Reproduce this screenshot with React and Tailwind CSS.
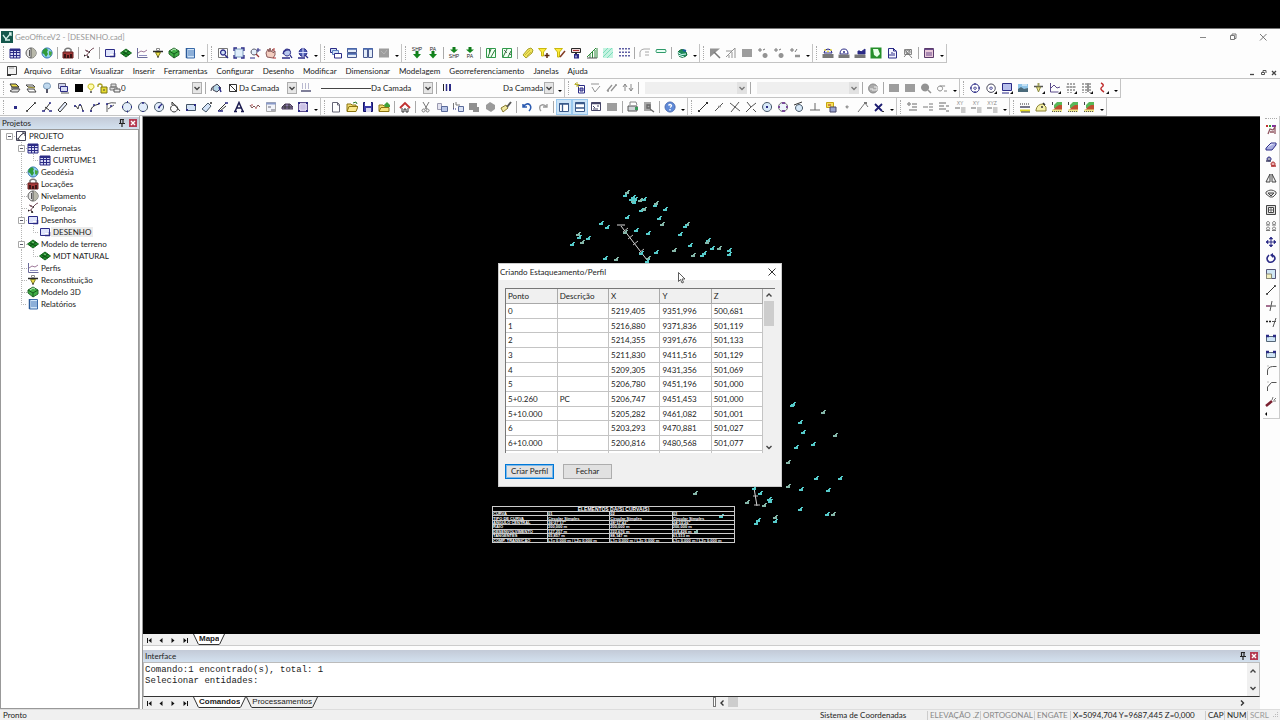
import React, { useState } from 'react'

const N = '#2b2b86'
const G = '#939393'
const K = '#2a2a2a'
const B = '#5a7fc0'
const L = '#cfe0f5'
const Y = '#f0e04a'
const E = '#1f8a2a'
const R = '#b03030'

// every shape is [path, stroke, fill, stroke width], drawn on a 12x12 grid
const icons = {
    table: [['M1 2h10v9H1z', N, '#d6d8f4'], ['M1 3h10', N, '', 2], ['M1 5.500h10M1 8.500h10M4.500 3v8M7.500 3v8', N]],
    level: [['M6 1a5 5 0 1 0 .1 0z', '#555', '#e4e4e4'], ['M6 1a5 5 0 0 1 0 10z', '', '#b8b8aa'], ['M6 1v10M4.500 3v6', '#555']],
    globe: [['M6 1a5 5 0 1 0 .1 0z', '#2a6ab0', '#8fd0ee'], ['M2 3l3-2 2 2-1 2 1 2-2 3-2-3-2-1z', '', '#2f9a3a'], ['M8 4l3 1-1 4-2-1z', '', '#49a83c']],
    lock: [['M3 5V2.500Q6 0 9 2.500V5', '#777', '', 1.5], ['M1 5h10v6H1z', '#6a2020', '#a33838'], ['M2 7h2v4H2zM8 7h2v4H8zM5 8h2v3H5z', '', '#3a1414']],
    poly: [['M1 9l3-1 2-3-3-1M6 5l3-3 2-1M4 8l2 3M2 3l3 1', '#7a5560'], ['M1 8.500h1M6 5h1M4 10h2', '#222', '', 1.5]],
    doc: [['M1.500 2.500h9v7h-9z', N, '#dfe4fb'], ['M6 7h4v3H6z', '', '#fff'], ['M6 9.500h5M10.500 6v4', N, '', 1.5]],
    diamond: [['M6 2l5.500 4L6 10 .5 6z', '#14641c', E], ['M3 5l6 3M9 4L3 8', '#0d4a14'], ['M5 4l2 1', '#8ad08a']],
    profile: [['M1.500 1v9.500h10', '#6a6a9a'], ['M2 6l3-2 3 1 3-2', '#a07a9a'], ['M3 8.500h8', '#8f8fc0']],
    recon: [['M1 4.500h10', K, '', 1.5], ['M3.500 5.500h5L6 10z', '#7a7a20', Y], ['M4.500 1.500h3v2h-3z', '#888', '#fff'], ['M6 9v2', K]],
    model3d: [['M6 1l5 3v4l-5 3-5-4V4z', '#2a6a30', '#3fae45'], ['M1 4l5 3 5-3M6 7v4', '#155a1c'], ['M3 4l3-2 2 1', '#bfeabf']],
    report: [['M2.500 1.500h8v9.500h-8z', '#3a6aa8', '#cfe4f8'], ['M4 4h6M4 6h6M4 8h6', '#4a7ab8'], ['M2.500 1v10', '#2a5a98', '', 1.5]],
    project: [['M1.500 1.500h9v9h-9z', '#44445a', '#fff'], ['M3 9l3-4 3-2M1 9h3v2', '#334'], ['M7 3h3v3', '#334']],
    zoomWin: [['M1.500 1.500h9v9h-9z', '#777'], ['M6 3a2.500 2.500 0 1 0 .1 0z', N, L, 1.3], ['M8 8l3 3', N, '', 1.500]],
    zoomExt: [['M2 2h8v8H2z', '#7a9ac0', '#dfeefa'], ['M1 4V1h3M8 1h3v3M11 8v3H8M4 11H1V8', N, '', 1.3]],
    zoomScale: [['M5 2a3 3 0 1 0 .1 0z', '#556', '#e4f0fa'], ['M7 7l3 3', '#933', '', 1.3], ['M9 1v4M7.500 3h4M1 11h5', N]],
    pan: [['M2 10L1 6l2-4 1 3 1-4 1 4 2-3 0 4 2-2v4l-2 3z', '#8a5a5a', '#f3cdbf'], ['M9 1v3M8 11h3', R]],
    zoomPrev: [['M6 2a3.500 3.500 0 1 0 .1 0z', N, '#b8c8ee'], ['M9 8l2 3M2 7Q3 2 9 3M1 11h8', N, '', 1.300]],
    zoomAll: [['M6 1.500a4 4 0 1 0 .1 0z', N, '#4c5cb0'], ['M6 0v11M1 5.500h10', '#dfe4ff'], ['M8 8l3 3M1 11h7', N, '', 1.3]],
    cascade: [['M.5 1.500h6v4h-6z', N, L], ['M2.500 3.500h6v4h-6z', B, L], ['M4.500 6.500h7v4.500h-7z', N, '#fff']],
    tileH: [['M1.500 1.500h9v4h-9zM1.500 6.500h9v4h-9z', '#4a5a90', '#e4edf8'], ['M1 2h10M1 7h10', '#4a6ab0', '', 1.5]],
    tileV: [['M1.500 1.500h4v9h-4zM6.500 1.500h4v9h-4z', '#4a5a90', '#e4edf8'], ['M1 2h10', '#4a6ab0', '', 1.5]],
    greyBox: [['M1 1.500h10v9H1z', '', '#9d9d9d'], ['M3 4l3 3 3-4', '#b5b5b5']],
    down: [['M6 4v4', '#0f7a1a', '', 3], ['M2 7h8l-4 4.500z', '', '#12851c']],
    top: [['M6 0v3', '#0f7a1a', '', 3], ['M2 2.500h8L6 6z', '', '#12851c']],
    hatch: [['M1.500 1.500h9v9h-9z', '#2f9a4a', '#f2fff4'], ['M3 10l3-8M6 10l4-7M4.500 2v4', '#2f7a3c']],
    hatch2: [['M1.500 1.500h9v9h-9z', '#2f9a4a', '#f2fff4'], ['M2 10l4-8M7 10l3-6', '#2f7a3c'], ['M3 3l3 3M8 6l2 2', K, '', .7]],
    tag: [['M1 8l5-6 3-1 2 2-1 3-6 5z', '#a8a02a', '#efe35a'], ['M3 8l5-5M5 9l4-4', '#c8b83a']],
    filterAdd: [['M.5 1.500h8L5.500 5v4h-2V5z', '#c8b80f', '#ffec3a'], ['M9 6v5M6.500 8.500h5', '#5a2a10', '', 1.5]],
    filterEdit: [['M.5 1.500h8L5.500 5v5h-2V5z', '#c8b80f', '#ffec3a'], ['M6 10l5-6', '#803a20', '', 1.5]],
    save2: [['M1.500 1.500h9v4h-9z', K, '#f0dada'], ['M3 3.500h6', R], ['M6 6v2', K, '', 2], ['M4 7h5v4.500H4z', '', N], ['M6 8.500v2', '#fff']],
    rain: [['M1 10l9-9M4 11V7M6.500 11V5M9 11V3M11 11V1', '#2f8a3c'], ['M1 11h10', '#555']],
    wash: [['M1 1h10v10H1z', '', '#c4f3e0'], ['M1 6l5-5M1 10l9-9M5 11l6-6', '#7bdcbc']],
    dots: [['M2 1v10M5 1v10M8 1v10M11 1v10', N, '', 1.5, '1.500 2']],
    arcText: [['M1 10V5Q2 2 5 2h6M6 5h4M6 8h4', '#a8a8a8']],
    pill: [['M1.500 2.500h9q1 2 0 3h-9q-1-1 0-3z', '#2f9a6a', '#e9fff5']],
    planet: [['M2 5q4-5 8 0l1 3q-4 4-8 1z', '#176a3a', '#1d8a5a'], ['M1 5q4 4 9 2M2 8l6 2', '#dff'], ['M7 3l3 1', '#1a5aa0', '', 2]],
    gTri: [['M1 1.500h10L1 10z', '', G], ['M5 5l6 6', '#777', '', 1.5]],
    gLines: [['M1 10L10 1M10 1v10M7 5v6M4 8v3M1 4h6', G]],
    gRect: [['M1 2h10v8H1z', '', '#9d9d9d']],
    gDots: [['M1 3h4M3 1v4M6 3l2-1', '#777'], ['M8 6a2.500 2.500 0 1 0 .1 0z', '', G]],
    gMinus: [['M1 3h4M3 1v4M6 5l2-3', '#777'], ['M6 9h5', G, '', 2.500]],
    dome: [['M2 6q0-4 4-4t4 4z', N, '#e9e9ff'], ['M.5 7h11v4H.5z', '', '#777'], ['M2 3h2M8 3h2M5 4.500h2', Y, '', 1.5]],
    dome2: [['M2 7q0-5 4-5t4 5z', N, '#fff'], ['M5 5h2', N, '', 1.5], ['M.5 7.500h11V11H.5z', '', '#777']],
    dome3: [['M4 7V4h2l1 1 4-3v5z', N, N], ['M.5 7.500h11V11H.5z', '', '#777']],
    greenTile: [['M.5 .5h11v11H.5z', '', '#258f2a'], ['M3 2h5l2 5-3 3-3-2z', '', '#e8ffe8']],
    page: [['M2.500 1.500h5l3 3v6.500h-8z', N, '#f4f4ff'], ['M4 9V7M6 9V5M8 9V6M7.500 1v3h3', N]],
    pageX: [['M2.500 2.500h7v5h-7z', '#888', '#eee'], ['M2 10l7-8M3 3l7 8', '#666', '', .8], ['M6 3a2 2 0 1 0 .1 0z', '#777']],
    frame: [['M1.500 1.500h9v9h-9z', '#5a3a6a', '#e8c8d8'], ['M1 2.500h10M3 6h6M3 8h6', '#6a4a8a', '', 1.200]],
    layers: [['M1 9l3-2h7l-2 3H3z', '#555', '#ddd'], ['M1 2h6l3 3H3z', '#333', Y], ['M2 6h8', K]],
    layers2: [['M1 3h7l2 2H3zM2 7h7l2 3H4z', '#444', '#fff'], ['M3 5l7 1', '#9a9030']],
    bulbBlue: [['M6 1a3 3 0 0 1 1 6H5a3 3 0 0 1 1-6z', '#7a9ab8', '#bfd8ee'], ['M6 7v4', '#556', '', 2]],
    layers3: [['M1.500 1.500h7l0 5h-7z', '#667', '#d0d4ee'], ['M3.500 4.500h7v5h-7z', N, '#d8dcf4'], ['M4 11h8', '#555']],
    black: [['M2 2h8v8H2z', '', '#000']],
    bulb: [['M6 2a2.500 2.500 0 0 1 1 5v1H5V7a2.500 2.500 0 0 1 1-5z', '#c8bd20', '#fffcb0'], ['M6 9v2', '#777', '', 2]],
    padlock: [['M1 5V3q2-2 4 0v2', '#a8a020', '', 1.3], ['M4 5h6v6H4z', '#7a7410', '#e8dc30'], ['M7 7v2', '#444']],
    printer: [['M2 2h5v3H2zM1 5h7v3H1z', '#777', '#ddd'], ['M5 7h6v3H5z', '#555', '#eee']],
    bucket: [['M3 5l4-3 4 4-4 4-4-2z', '#445', '#b8d8e8'], ['M1 9q0-4 3-5', '#445'], ['M9 5l2 5', N, '', 1.5]],
    noColor: [['M2.500 2.500h7v7h-7z', '#333', '#fff'], ['M2 2l8 8', '#333']],
    lineType: [['M2.500 1v6M5.500 1v6M8.500 1v6', '#b9b9d0'], ['M1 9h10', '#557', '', 1.500]],
    weight: [['M2.500 2v7', '#222', '', 1], ['M5.500 2v7', N, '', 1.5], ['M9 2v7', N, '', 2]],
    newBlock: [['M4.500 3.500h6v7.500h-6z', N, '#fff'], ['M6 6h3v3H6z', N, '#99c'], ['M3 0v5M.5 2.500h5M1 1l4 4', '#b8b030']],
    gCheck: [['M1 2h8M2 5l3 5 5-6', G]],
    gSlash: [['M1 9l5-6M5 9l5-6M1 9h2M9 3h2', G, '', 1.3]],
    gArrows: [['M3 9V2M1 5l2-3 2 3M9 2v7M7 6l2 3 2-3', '#888']],
    gCircle: [['M6 2a4.500 4.500 0 1 0 .1 0z', '#888', '#aaa'], ['M3 7h3v2M7 5h3v3H7', '#eee']],
    gBlob: [['M5 1.500a4 4 0 1 0 .1 0z', '', G], ['M8 8l3 3', G, '', 1.5]],
    gSigma: [['M4 4a2.500 2.500 0 1 0 .1 0h5M8 9h3', '#888']],
    ring: [['M6 2a4.200 4.200 0 1 0 .1 0z', N, '#fff'], ['M6 5a1.200 1.200 0 1 0 .1 0zM6 1v2M6 9v2M1 6h2M9 6h2', N]],
    ring2: [['M6 2a4.200 4.200 0 1 0 .1 0z', '#445', '#fff'], ['M6 5a1.200 1.200 0 1 0 .1 0z', N], ['M12 9v3H9z', '', '#111']],
    screen2: [['M1.500 1.500h9v7h-9z', N, '#b8c0ec'], ['M12 9v3H9z', '', '#111'], ['M1 11h7', N]],
    photo: [['M1 2h10v8H1z', '', '#8fc4e8'], ['M1 10V7l3-2 3 2 4-1v4z', '', '#4a6a7a'], ['M5 3h5', '#fff']],
    recon2: [['M1 4.500h9', '#555', '', 1.5], ['M3.500 5h4l-2 5z', '#8a8a40', '#f0e890'], ['M5.500 1v3', '#a0a060', '', 2], ['M12 9v3H9z', '', '#111']],
    prof2: [['M1.500 1v9h8M2 6l3-3 3 3 3-1', '#5a4a8a'], ['M12 9v3H9z', '', '#111']],
    sect: [['M3 1v10M6 1v10M9 1v8', '#555', '', 1, '2 1'], ['M1 5h10', '#999'], ['M12 9v3H9z', '', '#111']],
    sect2: [['M2 1v10M5 1v10M9 1v10', '#555', '', 1, '2 1'], ['M7 1v9', K], ['M12 9v3H9z', '', '#111']],
    river: [['M4 1q4 2 1 4t2 5', '#c03030', '', 1.500], ['M12 9v3H9z', '', '#111']],
    point: [['M5 5h3v3H5z', '', N]],
    line: [['M2 10l8-8', '#333'], ['M1 10h2M9 2h2', '#333', '', 1.5]],
    angle: [['M3 10l6-8M4 6l4 3', '#333'], ['M1 10h3M8 10h3', N, '', 1.5], ['M8 2h2', N, '', 1.5]],
    ruler: [['M1 9l7-8 2 2-7 8z', '#333', '#e8f0ff']],
    curve: [['M1 5h2l2 3q1-6 3-4l2 6', '#444'], ['M1 5h2M6 4h2M9 10h2', N, '', 1.5]],
    arc: [['M2 11Q1 5 10 3', '#333'], ['M1 10h2M4 4h2M9 2.500h2', N, '', 1.5]],
    arc2: [['M2 11V3q4-2 9-1M3 8l6-4', '#333', '', .8], ['M1 3h2M5 5h2', N, '', 1.5]],
    circle: [['M6 1.500a4.500 4.500 0 1 0 .1 0z', '#456', '#e2edfb'], ['M6 1h1M1 6h1M10 6h1M6 10.500h1', N, '', 2]],
    circle2: [['M6 1.500a4.500 4.500 0 1 0 .1 0z', '#456', '#e2edfb'], ['M6 1v2M6 10v1', N, '', 1.5]],
    circle3: [['M6 1.500a4.500 4.500 0 1 0 .1 0z', '#456', '#e2edfb'], ['M6 6l3-3M5 6.500h2', N, '', 1.300]],
    tan: [['M5 4a3.500 3.500 0 1 0 .1 0z', '#333'], ['M3 1l8 9M3 1v3', '#333']],
    rect: [['M1.500 3.500h9v6h-9z', '#456', '#d3e2f7'], ['M1 9h2M9 4h2', N, '', 2]],
    rect2: [['M1 8l6-6 3 3-5 6z', '#456', '#d3e2f7'], ['M9 2h2', K, '', 1.5]],
    rect3: [['M1 10l8-8M3 10l6-5', '#333'], ['M1 10h5M8 2h3', N, '', 1.3]],
    text: [['M2 10.500l4-9 4 9M4 7h5M1 10.500h3M8 10.500h3', '#1c1c50', '', 1.5]],
    zig: [['M1 4l2 3 2-2 2 2 2-3 2 2', '#7a5050'], ['M2 4h2M6 7h2', '#c88', '', 1.5]],
    table2: [['M1.500 1.500h9v9h-9z', '#aaa', '#f2f4fa'], ['M1 2.500h10', '#8a9ac8', '', 2], ['M3 6h3M6 9h4', '#667']],
    bridge: [['M1 8V6l3-3h5l3 3v2z', '#4a3a5a', '#8a7aa8'], ['M1 6h10M4 3v5M8 3v5', '#333']],
    grid: [['M1.500 1.500h9v9h-9z', '#5a4a8a', '#dcd4ee'], ['M1 1h2v2H1zM9 1h2v2H9zM1 9h2v2H1zM9 9h2v2H9z', '', N], ['M5 2v8M7 2v8M2 5h8M2 7h8', '#b4a8d8', '', .5]],
    newFile: [['M2.500 1.500h5l2 2v7.500h-7z', '#667', '#fff'], ['M7.500 1.500v2.500h2', '#667']],
    open: [['M1 10V3h4l1 1h4v2', '#8a7410', '#f5dd74'], ['M1 10.500l2-5h9l-2 5z', '#8a7410', '#fbe88c'], ['M7 2l3-1 1 2', '#2a7a2a']],
    open2: [['M1 10V4h4l1 1h4v2', '#8a7410', '#f5dd74'], ['M1 10.500l2-4h8v4z', '#8a7410', '#f8e47c'], ['M6 4l3-3 3 3v2H7z', '', '#3fa03a']],
    disk: [['M1.500 1.500h9v9h-9z', '#16166a', '#3b3ba8'], ['M3 1h6v4H3z', '', '#fff'], ['M4 7h5v4H4z', '', '#d6d6ee']],
    home: [['M1 7l5-5 5 5', '#c03030', '', 1.8], ['M3 7v4h2V8h2v3h2V7', '#333', '#fff']],
    cut: [['M3 1l4 7M9 1L5 8M3.500 8a1.500 1.500 0 1 0 .1 0zM7.500 8a1.500 1.500 0 1 0 .1 0z', '#777']],
    copy: [['M1.500 2.500h4v6h-4z', '#9a9ab0', '#e4e4f0'], ['M5.500 5.500h6v5h-6z', '#5a6a9a', '#b9c6e8']],
    copy2: [['M1.500 2v6M4 1v3h4', '#777'], ['M6.500 5.500h5v5h-5z', '#5a6a9a', '#d9e2f4'], ['M1 8h4', N, '', 1, '1 1']],
    gPaste: [['M1 2h8v4h2v5H5V9H1z', '', '#8f8f8f']],
    gPaste2: [['M2 4l4-3 5 3v4l-4 3-5-3z', '', '#9a9a9a']],
    brush: [['M1 7l5-3 2 3-5 4z', '#887a30', '#f0e8a0'], ['M7 6l4-5', '#555', '', 2]],
    undo: [['M2 3v3h4M2 6q4-5 7-2 2 3-1 6', '#2a5ab0', '', 1.5]],
    redo: [['M10 3v3H6M10 6Q6 2 3 5q-1 3 1 5', '#999', '', 1.300]],
    panelL: [['M1.500 2.500h9v8h-9z', '#3a5a8a', '#fff'], ['M1 3h10M4.500 3v7', '#3a5a8a', '', 1.3]],
    panelB: [['M1.500 1.500h9v9h-9z', '#3a5a8a', '#fff'], ['M1 2.500h10M1 7h10', '#3a5a8a', '', 1.3]],
    panelT: [['M1.500 1.500h9v8h-9z', '#446', '#fff'], ['M1 2.500h10', '#446', '', 1.5], ['M3 5l2 2M7 5h2M3 8h5', '#446']],
    print: [['M3 4V1h6l1 3', '#888', '#fff'], ['M1 5h9v5H1z', '#555', '#d0d4d8'], ['M8 6h3v3H8z', '', '#3a9a5a']],
    gFind: [['M1 1h7v9H1z', '', '#a8a8a8'], ['M4 4h3v3H4zM7 8l4 3', '#666', '', 1.3]],
    help: [['M6 1a5 5 0 1 0 .1 0z', '#4a6ab0', '#5f8ad8'], ['M4.500 4.500q1.500-2 3 0 0 1-1.500 2M6 8v1.500', '#fff', '', 1.3]],
    snapEnd: [['M2 10l7-7', '#333'], ['M9 2h2M1 10h2', '#333', '', 2]],
    snapMid: [['M2 10l8-8', '#555'], ['M5 5.500h3', '#999', '', 1.5]],
    snapX: [['M1 2l10 8M10 1L2 11', '#555']],
    snapX2: [['M2 1l4 5M6 6L1 11M6 6l5-4M8 8l3 3', '#555']],
    snapC: [['M6 1.500a4.500 4.500 0 1 0 .1 0z', '#456', '#d8e9f8'], ['M5 6h2', N, '', 2]],
    snapQ: [['M6 1.500a4.500 4.500 0 1 0 .1 0z', '#666', '#eef4fb'], ['M5 2h3M1 6h2M9 6h2M5 10h3', '#7a4a9a', '', 2]],
    snapT: [['M6 3.500a3.500 3.500 0 1 0 .1 0z', '#456', '#d8e9f8'], ['M1 4l8-3', '#333']],
    perp: [['M6 2v7M1 9h10', '#666']],
    snapI: [['M1.500 1.500h7v5h-7z', '#c8a410', '#f4e05a'], ['M5 6h6v5H5z', '#446', '#9aa4d0'], ['M3 4h3', R]],
    near: [['M6 5a1 1 0 1 0 .1 0z', '#777']],
    ext: [['M1 11l7-9M8 2l3 4', '#777'], ['M7 2h3', '#777', '', 2]],
    snapOff: [['M2 3l7 7M9 3L2 10', '#1c1c70', '', 1.800], ['M9 10.500h2', '#333']],
    gAlign: [['M1 3h4M3 1v4M6 3h5M6 6h5M3 9h8', '#999', '', 1.5]],
    gAlign2: [['M1 6h5M7 3h4M7 6h4M7 9h4', '#a4a4a4', '', 1.5]],
    gAlign3: [['M1 2h7M1 5h5M1 8h7M8 5h3M8 10h3', '#999', '', 1.5]],
    gRows: [['M1 7h5', '#999', '', 1.500], ['M7 7h4.500M7 9h4.500M7 11h4.500', '#999']],
    stake: [['M1 3h10', K, '', 1, '1 1'], ['M1 6h10', '#778', '', 2], ['M1 9.500h10', '#e0d820', '', 2], ['M2 11h9', K]],
    yDome: [['M1 9q1-6 7-6l3 3v4H1z', '#8a8030', '#f4f0a8'], ['M6 6h2M8 2l2 2', '#333', '', 1.5]],
    terrain: [['M3 7V4l3-3h5v6z', '', '#58b858'], ['M2 9l3-3 3-2h3v5z', '', '#c05030'], ['M1 8.500h10V11H1z', '', '#efe890'], ['M1 10.500h10', '#555', '', 1, '1 1'], ['M1.500 1v3', '#444']],
    palette: [['M1 1h2v2H1z', '', '#c03030'], ['M4 1h2v2H4z', '', '#30a030'], ['M7 1h4v2H7z', '', '#8030a0'], ['M3 10l2-5 3 1 2-3v7M5 8h4', '#905560', '', 1.3]],
    eraser: [['M1 8l5-5h5L7 8z', N, '#dfe2fa'], ['M1 8v2h6l4-5V3', N, '#a9aee0']],
    copyObj: [['M4 1a2 2 0 1 0 .1 0z', N, '#aab'], ['M8 6a2 2 0 1 0 .1 0z', R, '#e8b0b0'], ['M1 5h5', '#446', '', 1.5], ['M6 10h5', R, '', 1.5]],
    mirror: [['M5 2v8H1zM7 2v8h4z', '#444', '#eee']],
    offset: [['M1 4q5-4 10 0v2L8 9H5L1 6z', '#555', '#eee'], ['M3 5h6l-3 3z', '#444', '#ccc']],
    offset2: [['M1.500 1.500h9v9h-9z', '#444', '#ddd'], ['M3.500 3.500h5v5h-5z', '#444', '#fff'], ['M5 5h2v2H5z', '#666']],
    array: [['M3 1.500a1.500 1.500 0 1 0 .1 0zM9 1.500a1.500 1.500 0 1 0 .1 0zM3 7a1.500 1.500 0 1 0 .1 0zM9 7a1.500 1.500 0 1 0 .1 0z', '#777'], ['M1 5h4M7 5h4M1 10.500h4M7 10.500h4', '#777']],
    move: [['M6 1v10M1 6h10', N], ['M4 3l2-2 2 2zM4 9l2 2 2-2zM3 4L1 6l2 2zM9 4l2 2-2 2z', N, N, .5]],
    rotate: [['M4 3q-4 4 0 7 4 1 6-3 0-3-3-4', N, '', 1.600], ['M8 1L5 3l3 3z', '', N]],
    scale: [['M1.500 1.500h9v9h-9z', '#557', '#cfe6f4'], ['M1.500 6h5v4.500h-5z', '#887', '#f2f0c0']],
    trim: [['M1 6h10M7 1L5 11', '#555'], ['M1 6h4', '#a05080', '', 1.3]],
    extend: [['M1 5.500h6', '#222', '', 1.5, '2 1'], ['M7 5.500h4M11 2L8 11', '#555']],
    brk: [['M1.500 4.500h9v5h-9z', '#567', '#cfe4f7'], ['M1 4h3M8 4h3', N, '', 2.500]],
    fillet: [['M2.500 11V7q0-4 5-4.500h4', '#555'], ['M2 2h2', '#bbb']],
    chamfer: [['M2.500 11V7l4-4.500h5', '#555'], ['M2 2h2', '#bbb']],
    wand: [['M1 10l6-5', '#7a2030', '', 2.500], ['M7 4l1-3M9 4l2-2M8 5h3', '#777']],
    app: [['M0 0h12v12H0z', '', '#14574c'], ['M2 4l3 4 5-6M4 9h5M8 2h2v3', '#d6f0ea', '', 1.3]],
    docMenu: [['M1.500 1.500h9v8h-9z', '#444', '#f2f2f2'], ['M1 9h4v2H1z', '', '#333'], ['M3 3h5', '#999']],
    minus: [['M6.500 0v3M6.500 9v3M9 6.500h3', '#b5b5b5', '', 1, '1 1'], ['M3.500 3.500h6v6h-6z', '#a8a8a8', '#fff'], ['M5 6.500h3', '#556']],
    root: [['M9 6.500h3', '#b5b5b5', '', 1, '1 1'], ['M3.500 3.500h6v6h-6z', '#a8a8a8', '#fff'], ['M5 6.500h3', '#556']],
    branch: [['M6.500 0v12M7 6.500h5', '#b5b5b5', '', 1, '1 1']],
    trunk: [['M6.500 0v12', '#b5b5b5', '', 1, '1 1']],
    elbow: [['M6.500 0v6.500h5.500', '#b5b5b5', '', 1, '1 1']],
    blank: [],
    pin: [['M4 2.500h4M4.500 2v4M7 2v4M3 6.500h6M6 7v3', '#222', '', 1.2]],
    up: [['M3.500 7.500L6 5l2.500 2.500', '#444', '', 1.4]],
    dn: [['M3.500 5L6 7.500 8.500 5', '#444', '', 1.4]],
    lt: [['M7.500 3.500L5 6l2.500 2.500', '#333', '', 1.4]],
    rt: [['M5 3.500L7.500 6 5 8.500', '#333', '', 1.4]],
    first: [['M4.500 4v5', '#111'], ['M8.500 4v5L5.500 6.500z', '', '#111']],
    prev: [['M7.500 4v5L4.500 6.500z', '', '#111']],
    next: [['M4.500 4v5l3-2.500z', '', '#111']],
    last: [['M8.500 4v5', '#111'], ['M4.500 4v5l3-2.500z', '', '#111']],
    min: [['M3 6.500h6', '#888']],
    restore: [['M3.500 4.500h4v4h-4zM5 4.500V3h4v4.500H7.500', '#777']],
    close: [['M3 3l6.500 6.500M9.500 3L3 9.500', '#777']],
    closeDark: [['M2.500 2.500l7 7M9.500 2.500l-7 7', '#333']],
    closeWhite: [['M4 4l4 4M8 4l-4 4', '#fff', '', 1.4]],
    min2: [['M4 8.500h4', '#444', '', 1.300]],
    restore2: [['M4.500 6.500h3v2h-3zM6 6V4.500h3V7', '#555']],
    close2: [['M4 5l4 4M8 5L4 9', '#444', '', 1.300]],
    resize: [['M9.500 4v6M7.500 6v4M5.500 8v2', '#bbb', '', 1, '1 1']],
}

// [text, shapes, baseline, colour]
const captions = {
    shpIn: ['SHP', 'down', 4, '#222'], paIn: ['PA', 'down', 4, '#222'],
    shpOut: ['SHP', 'top', 11, '#222'], paOut: ['PA', 'top', 11, '#222'],
    gXY: ['XY', 'gRows', 4, '#888'], gXYZ: ['XYZ', 'gRows', 4, '#888'],
}

function Icon({ name }) {
    const caption = captions[name]
    const shapes = icons[caption ? caption[1] : name] || []
    return (
        <svg className="w-3 h-3 shrink-0" viewBox="0 0 12 12" aria-hidden="true">
            {shapes.map((s, i) => (
                <path key={i} d={s[0]} stroke={s[1] || 'none'} fill={s[2] || 'none'} strokeWidth={s[3] || 1} strokeDasharray={s[4]} />
            ))}
            {caption && <text x="6" y={caption[2]} textAnchor="middle" fontSize="5" fontFamily="Liberation Sans, sans-serif" fill={caption[3]}>{caption[0]}</text>}
        </svg>
    )
}

function Tool({ name, active }) {
    return (
        <button aria-label={name} className={active ? 'w-4 h-4 shrink-0 flex items-center justify-center bg-[#cce4f7] border border-[#99c8ee]' : 'w-4 h-4 shrink-0 flex items-center justify-center hover:bg-[#e5f1fb]'}>
            <Icon name={name} />
        </button>
    )
}

function Sep() {
    return <span className="w-[5px] shrink-0 flex justify-center"><i className="w-px h-3 bg-[#a9a9a9]"></i></span>
}

// list is a string of icon names, "|" puts a divider and "*" marks a pressed button
function Tools({ list }) {
    return list.split(' ').map((t, i) => t === '|' ? <Sep key={i} /> : <Tool key={i} name={t.replace('*', '')} active={t.endsWith('*')} />)
}

function Group({ children }) {
    return (
        <div className="flex items-center shrink-0 border-r border-b border-[#c4c4c4] bg-[#fdfdfd]">
            <span className="w-[7px] h-full shrink-0 flex items-center justify-center"><i className="h-3.5 border-l border-dotted border-[#aaa]"></i></span>
            {children}
            <button aria-label="Mais" className="w-[9px] h-4 shrink-0 flex items-end justify-center pb-1">
                <i className="border-x-2 border-t-2 border-x-transparent border-t-black"></i>
            </button>
        </div>
    )
}

function Combo({ label, value, disabled, className, children }) {
    return (
        <div className={'flex items-center h-3.5 shrink-0 pr-px ' + className}>
            {children}
            <select aria-label={label} disabled={disabled} className={disabled ? 'flex-1 min-w-0 h-3 bg-[#efefef] appearance-none' : 'flex-1 min-w-0 h-3 leading-3 appearance-none bg-transparent outline-none'}>
                <option>{value}</option>
            </select>
            <span className={disabled ? 'w-[10px] h-3 shrink-0 flex items-center justify-center bg-[#d8d8d8] opacity-70' : 'w-[10px] h-3 shrink-0 flex items-center justify-center bg-[#e6e6e6] border border-[#adadad]'}><Icon name="dn" /></span>
        </div>
    )
}

const menus = ['Arquivo', 'Editar', 'Visualizar', 'Inserir', 'Ferramentas', 'Configurar', 'Desenho', 'Modificar', 'Dimensionar', 'Modelagem', 'Georreferenciamento', 'Janelas', 'Ajuda']

const tree = [
    ['root', 'project', 'PROJETO'],
    ['blank minus', 'table', 'Cadernetas'],
    ['blank trunk elbow', 'table', 'CURTUME1'],
    ['blank branch', 'globe', 'Geodésia'],
    ['blank branch', 'lock', 'Locações'],
    ['blank branch', 'level', 'Nivelamento'],
    ['blank branch', 'poly', 'Poligonais'],
    ['blank minus', 'doc', 'Desenhos'],
    ['blank trunk elbow', 'doc', 'DESENHO'],
    ['blank minus', 'diamond', 'Modelo de terreno'],
    ['blank trunk elbow', 'diamond', 'MDT NATURAL'],
    ['blank branch', 'profile', 'Perfis'],
    ['blank branch', 'recon', 'Reconstituição'],
    ['blank branch', 'model3d', 'Modelo 3D'],
    ['blank elbow', 'report', 'Relatórios'],
]

const rows = [
    ['0', '', '5219,405', '9351,996', '500,681'],
    ['1', '', '5216,880', '9371,836', '501,119'],
    ['2', '', '5214,355', '9391,676', '501,133'],
    ['3', '', '5211,830', '9411,516', '501,129'],
    ['4', '', '5209,305', '9431,356', '501,069'],
    ['5', '', '5206,780', '9451,196', '501,000'],
    ['5+0.260', 'PC', '5206,747', '9451,453', '501,000'],
    ['5+10.000', '', '5205,282', '9461,082', '501,001'],
    ['6', '', '5203,293', '9470,881', '501,027'],
    ['6+10.000', '', '5200,816', '9480,568', '501,077'],
    ['', '', '', '', ''],
]

const curves = [
    ['CURVA', '01', '02', '03'],
    ['TIPO DE CURVA', 'Circular Simples', 'Circular Simples', 'Circular Simples'],
    ['ANGULO CENTRAL', '36°27\'17"', '28°17\'43"', '24°15\'26"'],
    ['RAIO', '200,000 m', '200,000 m', '200,000 m'],
    ['DESENVOLVIMENTO', '127,257 m', '222,676 m', '118,426 m'],
    ['TANGENTES', '65,857 m', '88,147 m', '61,513 m'],
    ['COMP. TRANSIÇÃO', 'L1= 0,000 m / L2= 0,000 m', 'L1= 0,000 m / L2= 0,000 m', 'L1= 0,000 m / L2= 0,000 m'],
]

const points = [
    [482, 78], [484, 75], [488, 82], [490, 80], [490, 84], [492, 82], [491, 85], [497, 83], [501, 82], [512, 88], [513, 86], [522, 92], [498, 93], [501, 92], [484, 100], [516, 101], [519, 107],
    [458, 106], [464, 110], [482, 115], [493, 113], [505, 116], [544, 107], [542, 109], [537, 117], [435, 117], [436, 120], [445, 121], [439, 125], [429, 127],
    [565, 123], [564, 125], [547, 128], [569, 131], [576, 131], [586, 133], [586, 137], [550, 138], [561, 136], [559, 138], [531, 133], [513, 135], [498, 136], [505, 141], [504, 144], [462, 141], [473, 142],
    [649, 288], [650, 287], [680, 295], [657, 305], [660, 315], [692, 318], [670, 327], [653, 330], [645, 345], [673, 361], [697, 361], [645, 369], [658, 372], [685, 373],
    [552, 376], [611, 371], [617, 376], [604, 385], [626, 382], [627, 384], [621, 388], [657, 392], [684, 397], [690, 397], [615, 403], [613, 406], [632, 400], [632, 404], [578, 399], [553, 414],
]

function Drawing() {
    return (
        <svg className="w-full h-full block" aria-label="Mapa">
            <path d="M474 108h8M478 109L504 143M611 371l3 18" stroke="#d8d8d8" fill="none" />
            <path d="M480 115l5-4M485 122l5-4M490 128l5-4M496 136l5-4M610 379h5M611 388h6" stroke="#bdbdbd" fill="none" />
            {points.map((p, i) => (
                <path key={i} d={'M' + (p[0] - 2) + ' ' + (p[1] + 2) + 'v-2h2v-1h1v-1h2v1h-1v3z'} fill={i % 3 === 1 ? '#86b8aa' : '#56cccc'} />
            ))}
        </svg>
    )
}

function CurveTable() {
    return (
        <table className="absolute left-[349px] top-[389px] w-[243px] h-[37px] table-fixed border-collapse border border-white text-white text-[4px] leading-[3px] font-['Liberation_Sans',sans-serif]">
            <colgroup><col className="w-[55px]" /><col /><col /><col /></colgroup>
            <thead>
                <tr><th colSpan={4} className="border border-[#ccc] p-0 text-[5px] leading-[4px]">ELEMENTOS DA(S) CURVA(S)</th></tr>
            </thead>
            <tbody>
                {curves.map((c) => (
                    <tr key={c[0]}>
                        {c.map((v, i) => <td key={i} className="border border-[#ccc] p-0 whitespace-nowrap font-bold">{v}</td>)}
                    </tr>
                ))}
            </tbody>
        </table>
    )
}

function PanelHeader({ title }) {
    return (
        <div className="h-3 shrink-0 flex items-center pl-0.5 pr-0.5 bg-linear-to-b from-[#c3cad7] to-[#d3e1ef]">
            <h2 className="flex-1">{title}</h2>
            <button aria-label="Fixar" className="w-3 h-3 mr-px"><Icon name="pin" /></button>
            <button aria-label="Fechar painel" className="w-2 h-2 flex items-center justify-center bg-[#b53a52]"><Icon name="closeWhite" /></button>
        </div>
    )
}

function SheetTab({ title, active, onClick }) {
    const fill = active ? '#fff' : '#f0f0f0'
    return (
        <button onClick={onClick} className="flex h-[11px] items-start leading-[10px]">
            <svg className="w-1.5 h-[11px]" viewBox="0 0 6 11"><path d="M.5 0l5 10.500H6V0z" fill={fill} /><path d="M.5 0l5 10.500" stroke="#333" fill="none" /></svg>
            <span className={active ? 'h-[11px] bg-white border-b border-[#333] font-bold' : 'h-[11px] bg-[#f0f0f0] border-b border-[#333]'}>{title}</span>
            <svg className="w-1.5 h-[11px]" viewBox="0 0 6 11"><path d="M5.500 0l-5 10.500H0V0z" fill={fill} /><path d="M5.500 0l-5 10.500" stroke="#333" fill="none" /></svg>
        </button>
    )
}

function SheetNav() {
    return ['first', 'prev', 'next', 'last'].map((n) => <button key={n} aria-label={n} className="w-3 h-3"><Icon name={n} /></button>)
}

function Dialog({ onClose }) {
    return (
        <section role="dialog" aria-label="Criando Estaqueamento/Perfil" className="relative w-[284px] bg-[#f0f0f0] text-[#222] border border-[#ccc]">
            <header className="h-4 pl-px pr-[3px] flex items-center bg-white">
                <h2 className="flex-1">Criando Estaqueamento/Perfil</h2>
                <button aria-label="Fechar janela" className="w-3 h-3" onClick={onClose}><Icon name="closeDark" /></button>
            </header>
            <div className="mt-2 mx-1.5 h-[165px] flex overflow-hidden border-t border-l border-[#777]">
                <div className="flex-1">
                    <table className="w-full h-[177px] table-fixed border-collapse bg-white">
                        <thead>
                            <tr className="h-[15px] bg-[#f0f0f0]">
                                {['Ponto', 'Descrição', 'X', 'Y', 'Z'].map((h) => <th key={h} className="p-0 pl-0.5 text-left font-normal border-r border-b border-[#a9a9a9]">{h}</th>)}
                            </tr>
                        </thead>
                        <tbody>
                            {rows.map((r, i) => (
                                <tr key={i} className="h-3.5">
                                    {r.map((c, j) => <td key={j} className="p-0 pl-0.5 border-r border-b border-[#c4c4c4]">{c}</td>)}
                                </tr>
                            ))}
                        </tbody>
                    </table>
                </div>
                <div className="w-3 flex flex-col items-center bg-[#f0f0f0]">
                    <Icon name="up" />
                    <div className="w-[10px] h-[25px] bg-[#cdcdcd]"></div>
                    <div className="mt-auto flex"><Icon name="dn" /></div>
                </div>
            </div>
            <footer className="flex gap-[9px] pt-[11px] pb-[7px] pl-1.5">
                <button className="w-[49px] h-[15px] bg-[#e1e1e1] border border-[#0078d7] outline outline-1 -outline-offset-2 outline-[#7db8e8]">Criar Perfil</button>
                <button className="w-[49px] h-[15px] bg-[#e1e1e1] border border-[#adadad]" onClick={onClose}>Fechar</button>
            </footer>
            <svg className="absolute left-[179px] top-2 w-2 h-3" viewBox="0 0 8 12"><path d="M.5.5v9l2-2 1.500 3.500 1.500-.7L4 7h3z" fill="#fff" stroke="#333" strokeWidth=".8" /></svg>
        </section>
    )
}

function App() {
    const [open, setOpen] = useState(true)
    const [tab, setTab] = useState('Comandos')
    const [selected, setSelected] = useState('DESENHO')

    return (
        <div className="h-screen flex flex-col bg-black pt-7 overflow-hidden text-[8px] leading-[10px] text-[#222] font-['Lato',sans-serif]">
            <div className="relative flex-1 min-h-0 flex flex-col bg-[#fdfdfd] border-t border-[#777]">
                <header className="h-[15px] shrink-0 flex items-center pl-px pr-[11px] text-[#999]">
                    <Icon name="app" />
                    <h1 className="ml-0.5 flex-1">GeoOfficeV2 - [DESENHO.cad]</h1>
                    <div className="flex gap-[18px]">
                        <button aria-label="Minimizar"><Icon name="min" /></button>
                        <button aria-label="Restaurar"><Icon name="restore" /></button>
                        <button aria-label="Sair"><Icon name="close" /></button>
                    </div>
                </header>

                <div className="h-[19px] shrink-0 flex">
                    <Group><Tools list="table level globe | lock | poly | doc diamond profile recon model3d report" /></Group>
                    <Group><Tools list="zoomWin zoomExt zoomScale pan zoomPrev zoomAll" /></Group>
                    <Group><Tools list="cascade tileH tileV greyBox" /></Group>
                    <Group><Tools list="shpIn paIn | shpOut paOut | hatch hatch2 | tag filterAdd filterEdit save2 rain wash dots | arcText pill | planet" /></Group>
                    <Group><Tools list="gTri gLines gRect gDots gDots gMinus" /></Group>
                    <Group><Tools list="dome dome2 dome3 greenTile page pageX | frame" /></Group>
                </div>

                <nav className="h-4 shrink-0 flex items-center pl-1.5 pr-px border-b border-[#c4c4c4]">
                    <Icon name="docMenu" />
                    <div className="flex flex-1 gap-px ml-0.5">
                        {menus.map((m) => <button key={m} className="px-1 hover:bg-[#e5f1fb]">{m}</button>)}
                    </div>
                    <div className="flex self-end">
                        <button aria-label="Minimizar desenho" className="w-[11px]"><Icon name="min2" /></button>
                        <button aria-label="Restaurar desenho" className="w-[11px]"><Icon name="restore2" /></button>
                        <button aria-label="Fechar desenho" className="w-[11px]"><Icon name="close2" /></button>
                    </div>
                </nav>

                <div className="h-[19px] shrink-0 flex">
                    <Group>
                        <Tools list="layers layers2 bulbBlue layers3" />
                        <Combo label="Camada" value="0" className="w-[132px] pl-0.5">
                            <Icon name="black" /><Icon name="bulb" /><Icon name="padlock" /><Icon name="printer" />
                        </Combo>
                        <Tools list="| bucket" />
                        <Combo label="Cor" value="Da Camada" className="w-[74px] pl-[3px]"><Icon name="noColor" /></Combo>
                        <Tools list="lineType" />
                        <Combo label="Tipo de linha" value="Da Camada" className="w-[120px] pl-[7px]"><i className="w-[50px] h-px bg-[#444]"></i></Combo>
                        <Tools list="| weight" />
                        <Combo label="Espessura" value="Da Camada" className="w-[100px] pl-12" />
                    </Group>
                    <Group>
                        <Tools list="newBlock gCheck gSlash gArrows |" />
                        <Combo label="Bloco" value="" disabled className="w-[107px] pl-1" />
                        <Sep />
                        <Combo label="Estilo" value="" disabled className="w-[107px] pl-1" />
                        <Tools list="| gCircle | gRect gRect gBlob gSigma" />
                    </Group>
                    <Group><Tools list="ring ring2 screen2 photo recon2 prof2 sect sect2 river" /></Group>
                </div>

                <div className="h-[18px] shrink-0 flex">
                    <Group><Tools list="point line angle ruler curve arc arc2 circle circle2 circle3 tan rect rect2 rect3 text zig table2 bridge grid" /></Group>
                    <Group><Tools list="newFile open disk open2 | home | cut copy copy2 gPaste gPaste2 brush | undo redo | panelL* panelB* panelT gRect | print gFind | help" /></Group>
                    <Group><Tools list="snapEnd snapMid snapX snapX2 snapC snapQ snapT perp snapI near ext snapOff" /></Group>
                    <Group><Tools list="gAlign gAlign2 gAlign3 gXY gXY gXYZ" /></Group>
                    <Group><Tools list="stake yDome terrain terrain terrain" /></Group>
                </div>

                <div className="flex-1 min-h-0 flex">
                    <aside className="w-[140px] shrink-0 flex flex-col mr-[2px] pt-px border-r border-[#aaa]">
                        <PanelHeader title="Projetos" />
                        <ul className="flex-1 pl-0.5 border border-[#999] bg-white">
                            {tree.map(([guides, icon, label]) => (
                                <li key={label} className="flex h-3 items-center">
                                    {guides.split(' ').map((g, i) => <Icon key={i} name={g} />)}
                                    <Icon name={icon} />
                                    <button onClick={() => setSelected(label)} className={selected === label ? 'px-0.5 bg-[#ececec]' : 'px-0.5'}>{label}</button>
                                </li>
                            ))}
                        </ul>
                    </aside>

                    <main className="flex-1 min-w-0 flex flex-col border-l border-[#999]">
                        <div className="relative flex-1 min-h-0 bg-black border-t border-[#555]">
                            <Drawing />
                            <CurveTable />
                        </div>
                        <div className="h-3 shrink-0 flex items-start bg-[#f0f0f0] border-b border-[#ccc] font-['Liberation_Sans',sans-serif]">
                            <SheetNav />
                            <span className="w-0.5"></span>
                            <SheetTab title="Mapa" active />
                        </div>
                        <section className="mt-1 flex flex-col">
                            <PanelHeader title="Interface" />
                            <div className="flex h-[35px] border border-[#bbb] border-b-[#333]">
                                <textarea aria-label="Linha de comando" spellCheck={false} className="flex-1 resize-none outline-none pl-px pt-0.5 bg-white text-[9px] leading-[11px] overflow-hidden font-['Liberation_Mono',monospace]" defaultValue={'Comando:1 encontrado(s), total: 1\nSelecionar entidades:'} />
                                <div className="w-3 flex flex-col justify-between py-0.5 bg-[#f0f0f0]"><Icon name="up" /><Icon name="dn" /></div>
                            </div>
                            <div className="h-3 flex items-start bg-[#f0f0f0]">
                                <div className="flex w-[51%] font-['Liberation_Sans',sans-serif]">
                                    <SheetNav />
                                    <span className="w-0.5"></span>
                                    <SheetTab title="Comandos" active={tab === 'Comandos'} onClick={() => setTab('Comandos')} />
                                    <SheetTab title="Processamentos" active={tab === 'Processamentos'} onClick={() => setTab('Processamentos')} />
                                </div>
                                <i className="w-[3px] h-2.5 border border-[#777] bg-white"></i>
                                <Icon name="lt" />
                                <i className="w-[10px] h-2.5 bg-[#cdcdcd]"></i>
                                <span className="flex-1"></span>
                                <span className="mr-3"><Icon name="rt" /></span>
                            </div>
                        </section>
                    </main>

                    <aside className="w-5 shrink-0 pl-[3px]">
                        <div className="flex flex-col items-center border-r border-b border-[#ccc]">
                            <i className="w-3 mt-0.5 mb-[3px] border-t border-dotted border-[#aaa]"></i>
                            <Tools list="palette eraser copyObj mirror offset offset2 array move rotate scale line trim extend brk brk fillet chamfer wand" />
                            <button aria-label="Mais" className="h-2 w-3 flex items-center"><i className="border-y-2 border-r-2 border-y-transparent border-r-black"></i></button>
                        </div>
                    </aside>
                </div>

                <footer className="h-[11px] shrink-0 flex items-end pl-[3px] bg-[#f0f0f0] leading-[9px] border-t border-[#ddd] whitespace-nowrap">
                    <span className="flex-1">Pronto</span>
                    <span className="w-[107px]">Sistema de Coordenadas</span>
                    <span className="w-[53px] pl-0.5 border-l border-[#ccc] text-[#888]">ELEVAÇÃO .Z</span>
                    <span className="w-[54px] pl-0.5 border-l border-[#ccc] text-[#888]">ORTOGONAL</span>
                    <span className="w-9 pl-0.5 border-l border-[#ccc] text-[#888]">ENGATE</span>
                    <span className="w-[135px] pl-0.5 border-l border-[#ccc]">X=5094,704 Y=9687,445 Z=0,000</span>
                    <span className="w-[19px] pl-0.5 border-l border-[#ccc]">CAP</span>
                    <span className="w-[23px] pl-0.5 border-l border-[#ccc]">NUM</span>
                    <span className="w-[21px] pl-0.5 border-l border-[#ccc] text-[#999]">SCRL</span>
                    <Icon name="resize" />
                </footer>

                {open && (
                    <div className="absolute inset-0 flex items-center justify-center pointer-events-none">
                        <div className="pointer-events-auto"><Dialog onClose={() => setOpen(false)} /></div>
                    </div>
                )}
            </div>
        </div>
    )
}

export default App
